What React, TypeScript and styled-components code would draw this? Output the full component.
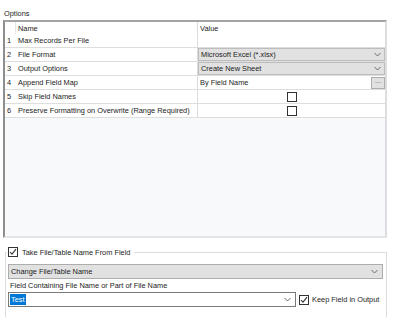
import React from 'react'
import styled, { createGlobalStyle } from 'styled-components'

const GlobalStyle = createGlobalStyle`
  body {
    margin: 0;
    background: #ffffff;
    font-family: 'Liberation Sans', Arial, sans-serif;
    font-size: 7.4px;
    color: #1b1b1b;
  }
`

type Row = {
  n: number
  name: string
  kind: 'empty' | 'select' | 'map' | 'check'
  value?: string
}

const rows: Row[] = [
  { n: 1, name: 'Max Records Per File', kind: 'empty' },
  { n: 2, name: 'File Format', kind: 'select', value: 'Microsoft Excel (*.xlsx)' },
  { n: 3, name: 'Output Options', kind: 'select', value: 'Create New Sheet' },
  { n: 4, name: 'Append Field Map', kind: 'map', value: 'By Field Name' },
  { n: 5, name: 'Skip Field Names', kind: 'check' },
  { n: 6, name: 'Preserve Formatting on Overwrite (Range Required)', kind: 'check' },
]

function Chevron() {
  return (
    <svg width="7" height="5" viewBox="0 0 7 5">
      <path d="M0.5 1 L3.5 4 L6.5 1" fill="none" stroke="#6b6b6b" strokeWidth="1" />
    </svg>
  )
}

function Box({ checked }: { checked?: boolean }) {
  return (
    <CheckBox>
      {checked && (
        <svg width="8" height="8" viewBox="0 0 8 8">
          <path d="M1 4 L3 6.2 L7 1.2" fill="none" stroke="#333" strokeWidth="1.1" />
        </svg>
      )}
    </CheckBox>
  )
}

export default function App(): JSX.Element {
  return (
    <Page>
      <GlobalStyle />
      <SectionLabel>Options</SectionLabel>
      <GridPanel>
        <GridRow $header>
          <NumCell $header />
          <NameCell>Name</NameCell>
          <ValueCell>Value</ValueCell>
        </GridRow>
        {rows.map((r) => (
          <GridRow key={r.n}>
            <NumCell>{r.n}</NumCell>
            <NameCell>{r.name}</NameCell>
            {r.kind === 'empty' && <ValueCell />}
            {r.kind === 'select' && (
              <ValueCell>
                <SelectCell>
                  <span>{r.value}</span>
                  <Chevron />
                </SelectCell>
              </ValueCell>
            )}
            {r.kind === 'map' && (
              <ValueCell>
                <MapCell>
                  <span>{r.value}</span>
                  <DotsButton>...</DotsButton>
                </MapCell>
              </ValueCell>
            )}
            {r.kind === 'check' && (
              <ValueCell $center>
                <Box />
              </ValueCell>
            )}
          </GridRow>
        ))}
      </GridPanel>

      <Group>
        <Legend>
          <Box checked />
          <span>Take File/Table Name From Field</span>
        </Legend>
        <WideSelect>
          <span>Change File/Table Name</span>
          <Chevron />
        </WideSelect>
        <FieldLabel>Field Containing File Name or Part of File Name</FieldLabel>
        <FieldRow>
          <FieldInput>
            <Selected>Test</Selected>
            <Chevron />
          </FieldInput>
          <KeepLabel>
            <Box checked />
            <span>Keep Field in Output</span>
          </KeepLabel>
        </FieldRow>
      </Group>
    </Page>
  )
}

const Page = styled.div`
  width: 400px;
  height: 328px;
  padding: 0 13px 0 3px;
  box-sizing: border-box;
  display: flex;
  flex-direction: column;
`

const SectionLabel = styled.div`
  height: 20px;
  padding: 9px 0 0 1px;
  box-sizing: border-box;
  line-height: 9px;
`

const GridPanel = styled.div`
  height: 218px;
  box-sizing: border-box;
  border-top: 2px solid #a3a3a3;
  border-left: 2px solid #8e8e8e;
  border-right: 2px solid #dcdde0;
  border-bottom: 2px solid #e4e5e8;
  background: #f8f9fb;
  display: flex;
  flex-direction: column;
`

const GridRow = styled.div<{ $header?: boolean }>`
  display: grid;
  grid-template-columns: 11px 181px 1fr;
  height: ${(p) => (p.$header ? 12 : 14)}px;
  background: #ffffff;
  border-bottom: 1px solid ${(p) => (p.$header ? '#ffffff' : '#dedede')};
  box-sizing: border-box;
  line-height: 13px;
`

const NumCell = styled.div<{ $header?: boolean }>`
  padding-left: 2px;
  border-right: 1px solid ${(p) => (p.$header ? '#e6e6e6' : '#ffffff')};
`

const NameCell = styled.div`
  padding-left: 2px;
  white-space: nowrap;
  overflow: hidden;
`

const ValueCell = styled.div<{ $center?: boolean }>`
  border-left: 1px solid #dcdcdc;
  padding-left: ${(p) => (p.$center ? 0 : 2)}px;
  display: flex;
  align-items: ${(p) => (p.$center ? 'center' : 'stretch')};
  justify-content: ${(p) => (p.$center ? 'center' : 'flex-start')};
`

const SelectCell = styled.div`
  flex: 1;
  margin-left: -2px;
  background: #e1e1e1;
  border: 1px solid #bdbdbd;
  display: flex;
  align-items: center;
  justify-content: space-between;
  padding: 0 3px 0 2px;
  line-height: 11px;
`

const MapCell = styled.div`
  flex: 1;
  display: flex;
  align-items: center;
  justify-content: space-between;
`

const DotsButton = styled.div`
  width: 14px;
  height: 12px;
  background: #e1e1e1;
  border: 1px solid #adadad;
  box-sizing: border-box;
  font-size: 7px;
  line-height: 6px;
  text-align: center;
  color: #555;
`

const CheckBox = styled.span`
  width: 10px;
  height: 10px;
  box-sizing: border-box;
  border: 1px solid #333333;
  background: #ffffff;
  display: inline-flex;
  align-items: center;
  justify-content: center;
  flex-shrink: 0;
`

const Group = styled.fieldset`
  margin: 9px 0 0 2px;
  padding: 4px 3px 10px 2px;
  border: 1px solid #dcdcdc;
  border-bottom: none;
  display: flex;
  flex-direction: column;
  min-width: 0;
`

const Legend = styled.legend`
  padding: 0 4px 0 1px;
  margin-left: -1px;
  display: flex;
  align-items: center;
  gap: 4px;
`

const WideSelect = styled.div`
  height: 15px;
  box-sizing: border-box;
  background: #e1e1e1;
  border: 1px solid #adadad;
  display: flex;
  align-items: center;
  justify-content: space-between;
  padding: 0 4px 0 2px;
  margin-top: 3px;
`

const FieldLabel = styled.div`
  margin-top: 1px;
  height: 12px;
  line-height: 12px;
  padding-left: 2px;
`

const FieldRow = styled.div`
  display: flex;
  align-items: center;
  gap: 3px;
  margin-top: 0;
`

const FieldInput = styled.div`
  width: 288px;
  height: 15px;
  box-sizing: border-box;
  border: 1px solid #7a7a7a;
  background: #ffffff;
  display: flex;
  align-items: center;
  justify-content: space-between;
  padding: 0 4px 0 1px;
`

const Selected = styled.span`
  background: #0078d7;
  color: #ffffff;
  padding: 0 1px;
  line-height: 11px;
`

const KeepLabel = styled.label`
  display: flex;
  align-items: center;
  gap: 3px;
  white-space: nowrap;
`
